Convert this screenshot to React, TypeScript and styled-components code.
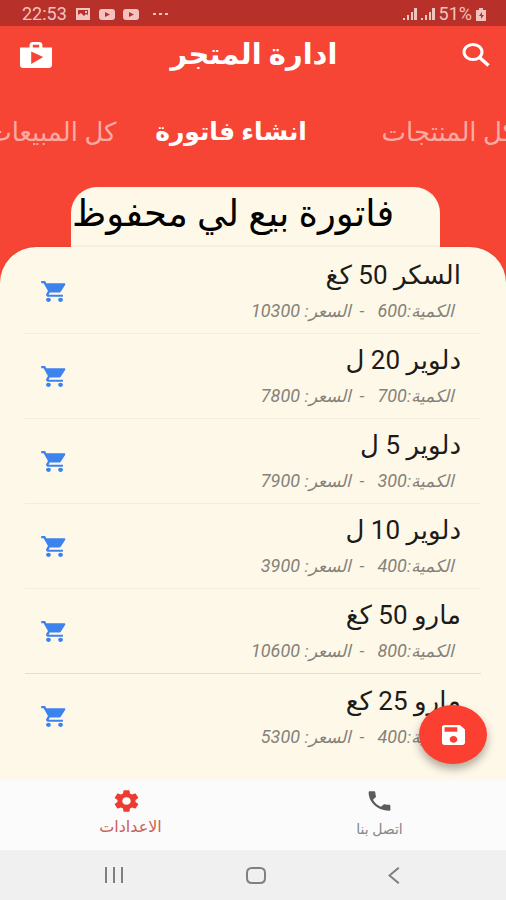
import React from "react";
import styled, { createGlobalStyle } from "styled-components";

const red = "#f64435";
const cream = "#fef8e9";

const GlobalStyle = createGlobalStyle`
  * { box-sizing: border-box; }
  body {
    margin: 0;
    font-family: Roboto, "DejaVu Sans", sans-serif;
    background: ${red};
  }
  button { font: inherit; border: 0; padding: 0; background: none; cursor: pointer; }
  svg { display: block; flex: none; }
`;

const Screen = styled.div`
  display: flex;
  flex-direction: column;
  height: 100vh;
  background: ${red};
`;

const StatusBar = styled.div`
  display: flex;
  align-items: center;
  justify-content: space-between;
  height: 26px;
  flex: none;
  padding: 2px 20px 0 22px;
  background: #b7312a;
  color: #f3c3bf;
  font-size: 18px;
  line-height: 24px;
`;

const StatusGroup = styled.div<{ $gap: number }>`
  display: flex;
  align-items: center;
  gap: ${(p) => p.$gap}px;
`;

const AppBar = styled.header`
  display: grid;
  grid-template-columns: 32px 1fr 32px;
  align-items: center;
  height: 60px;
  flex: none;
  padding: 0 14px 2px 20px;
  color: #fff;
`;

const AppTitle = styled.h1`
  margin: 0;
  padding: 0 4px 2px 0;
  font-size: 29px;
  line-height: 40px;
  font-weight: 700;
  text-align: center;
`;

const IconButton = styled.button`
  display: flex;
  align-items: center;
  justify-content: center;
  color: inherit;
`;

const TabBar = styled.nav`
  display: grid;
  grid-template-columns: 25% 1fr 25%;
  align-items: center;
  height: 92px;
  flex: none;
  overflow: hidden;
`;

const Tab = styled.button<{ $active?: boolean; $edge?: "left" | "right" }>`
  display: flex;
  min-width: 0;
  padding-left: ${(p) => (p.$edge === "right" ? 2 : 0)}px;
  padding-right: ${(p) => (p.$edge === "left" ? 10 : p.$edge === "right" ? 0 : 44)}px;
  justify-content: ${(p) =>
    p.$edge === "left" ? "flex-end" : p.$edge === "right" ? "flex-start" : "center"};
  color: ${(p) => (p.$active ? "#fff" : "#fbaaa2")};
  font-size: ${(p) => (p.$active ? 25 : 26)}px;
  line-height: 32px;
  font-weight: ${(p) => (p.$active ? 700 : 400)};
  white-space: nowrap;
`;

const InvoiceTab = styled.div`
  align-self: flex-start;
  flex: none;
  display: flex;
  align-items: center;
  width: 73%;
  height: 60px;
  margin: 9px 0 0 14%;
  padding: 0 46px 6px 0;
  border-radius: 26px 26px 0 0;
  background: ${cream};
`;

const InvoiceTitle = styled.h2`
  flex: 1;
  margin: 0;
  color: #000;
  font-size: 37px;
  line-height: 44px;
  font-weight: 400;
  white-space: nowrap;
`;

const Panel = styled.main`
  position: relative;
  flex: 1;
  min-height: 0;
  border-radius: 36px 36px 0 0;
  background: ${cream};
  box-shadow: 0 -1px 2px rgba(120, 90, 40, 0.12);
`;

const List = styled.ul`
  list-style: none;
  margin: 0;
  padding: 2px 25px 0;
  height: 100%;
  overflow: hidden;
`;

const Row = styled.li<{ $strong?: boolean }>`
  display: flex;
  align-items: center;
  justify-content: space-between;
  height: 85px;
  padding: 0 20px 0 15px;
  border-bottom: 1px solid ${(p) => (p.$strong ? "#e6dccf" : "#f6ebdd")};
  &:last-child { border-bottom: 0; }
`;

const CartButton = styled(IconButton)`
  color: #3d83ee;
`;

const RowText = styled.div`
  display: flex;
  flex-direction: column;
  gap: 4px;
`;

const ItemName = styled.div`
  color: #1c1b19;
  font-size: 26px;
  line-height: 36px;
`;

const ItemMeta = styled.div`
  padding-right: 7px;
  color: #85827a;
  font-size: 18px;
  line-height: 28px;
  font-style: italic;
  white-space: pre;
`;

const MetaLabel = styled.span`
  font-size: 17px;
`;

const Fab = styled.button`
  position: absolute;
  right: 19px;
  bottom: 16px;
  display: flex;
  align-items: center;
  justify-content: center;
  width: 68px;
  height: 59px;
  border-radius: 50%;
  background: #fb4032;
  color: #fff;
  box-shadow: 0 5px 8px rgba(60, 50, 40, 0.4);
`;

const BottomNav = styled.nav`
  display: grid;
  grid-template-columns: 1fr 1fr;
  height: 70px;
  flex: none;
  background: #fbfbfb;
`;

const NavItem = styled.button<{ $active?: boolean }>`
  display: flex;
  flex-direction: column;
  align-items: center;
  padding-top: 8px;
  gap: ${(p) => (p.$active ? 2 : 4)}px;
  color: ${(p) => (p.$active ? "#ec3c32" : "#5c5c5c")};
`;

const NavLabel = styled.span<{ $active?: boolean }>`
  padding-left: ${(p) => (p.$active ? 8 : 0)}px;
  color: ${(p) => (p.$active ? "#c9605c" : "#858585")};
  font-size: ${(p) => (p.$active ? 16 : 14)}px;
  line-height: 22px;
`;

const SystemBar = styled.div`
  display: grid;
  grid-template-columns: 45% 11% 44%;
  height: 50px;
  flex: none;
  background: #f0f0f0;
  color: #808080;
`;

const SystemButton = styled(IconButton)<{ $align: string }>`
  justify-content: ${(p) => p.$align};
  padding: 0 ${(p) => (p.$align === "center" ? 0 : 105)}px;
`;

type GlyphProps = { d: string; w: number; h: number; box?: string };
const Glyph = ({ d, w, h, box = "0 0 24 24" }: GlyphProps) => (
  <svg width={w} height={h} viewBox={box} preserveAspectRatio="none" fill="currentColor" aria-hidden="true">
    <path fillRule="evenodd" d={d} />
  </svg>
);

const SearchIcon = () => (
  <svg width="28" height="24" viewBox="0 0 28 24" fill="none" stroke="currentColor" strokeWidth="3" aria-hidden="true">
    <ellipse cx="11" cy="9" rx="9" ry="7.500" />
    <path d="M17 14l9.500 8.500" strokeWidth="3.500" />
  </svg>
);

const icons = {
  shop: "M16 6V4c0-1.110-.89-2-2-2h-4c-1.110 0-2 .89-2 2v2H2v13c0 1.110.89 2 2 2h16c1.110 0 2-.89 2-2V6h-6zm-6-2h4v2h-4V4zM9 18V9l7.500 4L9 18z",
  cart: "M7 18c-1.100 0-1.990.9-1.990 2S5.900 22 7 22s2-.9 2-2-.9-2-2-2zM1 2v2h2l3.600 7.590-1.350 2.450c-.16.28-.25.61-.25.96 0 1.100.9 2 2 2h12v-2H7.420c-.14 0-.25-.11-.25-.25l.03-.12.9-1.630h7.450c.75 0 1.410-.41 1.750-1.030l3.580-6.490c.08-.14.12-.31.12-.48 0-.55-.45-1-1-1H5.210l-.94-2H1zm16 16c-1.100 0-1.990.9-1.990 2s.89 2 1.990 2 2-.9 2-2-.9-2-2-2z",
  save: "M17 3H5c-1.110 0-2 .9-2 2v14c0 1.100.89 2 2 2h14c1.100 0 2-.9 2-2V7l-4-4zm-5 16c-1.660 0-3-1.340-3-3s1.340-3 3-3 3 1.340 3 3-1.340 3-3 3zm3-10H5V5h10v4z",
  gear: "M19.430 12.980c.04-.32.07-.64.07-.98s-.03-.66-.07-.98l2.110-1.650c.19-.15.24-.42.12-.64l-2-3.460c-.12-.22-.39-.3-.61-.22l-2.490 1c-.52-.4-1.080-.73-1.690-.98l-.38-2.650A.488.488 0 0 0 14 2h-4c-.25 0-.46.18-.49.42l-.38 2.650c-.61.25-1.170.59-1.690.98l-2.490-1c-.23-.09-.49 0-.61.22l-2 3.460c-.13.22-.07.49.12.64l2.110 1.650c-.04.32-.07.65-.07.98s.03.66.07.98l-2.110 1.650c-.19.15-.24.42-.12.64l2 3.460c.12.22.39.3.61.22l2.490-1c.52.4 1.080.73 1.690.98l.38 2.650c.03.24.24.42.49.42h4c.25 0 .46-.18.49-.42l.38-2.650c.61-.25 1.170-.59 1.690-.98l2.490 1c.23.09.49 0 .61-.22l2-3.460c.12-.22.07-.49-.12-.64l-2.110-1.650zM12 15.500c-1.930 0-3.500-1.570-3.500-3.500s1.570-3.500 3.500-3.500 3.500 1.570 3.500 3.500-1.570 3.500-3.500 3.500z",
  phone:
    "M6.620 10.790c1.440 2.830 3.760 5.140 6.590 6.590l2.200-2.200c.27-.27.67-.36 1.020-.24 1.120.37 2.330.57 3.570.57.55 0 1 .45 1 1V20c0 .55-.45 1-1 1-9.390 0-17-7.610-17-17 0-.55.45-1 1-1h3.500c.55 0 1 .45 1 1 0 1.250.2 2.450.57 3.570.11.35.03.74-.25 1.020l-2.200 2.200z",
  image: "M1 0h14v12H1zM3 2v5l3-2 3 3 2-2 2 1V2zM10 3h2v2h-2z",
  video: "M3 0h10q3 0 3 3v5q0 3-3 3H3q-3 0-3-3V3q0-3 3-3zM6 3v5l5-2.500z",
  dots: "M0 0h3v2H0zM6 0h3v2H6zM12 0h3v2h-3z",
  signal: "M0 10h2v2H0zM4 7h2v5H4zM8 4h2v8H8zM11 0h3v12h-3z",
  battery: "M3 0h4v2h3v11H0V2h3zM6 4L3 8h2v3l3-4H6z",
};

const items = [
  { name: "السكر 50 كغ", qty: 600, price: 10300 },
  { name: "دلوير 20 ل", qty: 700, price: 7800 },
  { name: "دلوير 5 ل", qty: 300, price: 7900 },
  { name: "دلوير 10 ل", qty: 400, price: 3900 },
  { name: "مارو 50 كغ", qty: 800, price: 10600, strong: true },
  { name: "مارو 25 كع", qty: 400, price: 5300 },
];

export default function App() {
  return (
    <Screen>
      <GlobalStyle />
      <StatusBar>
        <StatusGroup $gap={8}>
          <span>22:53</span>
          <Glyph d={icons.image} w={16} h={12} box="0 0 16 12" />
          <Glyph d={icons.video} w={16} h={11} box="0 0 16 11" />
          <Glyph d={icons.video} w={16} h={11} box="0 0 16 11" />
          <Glyph d={icons.dots} w={22} h={2} box="-6 0 22 2" />
        </StatusGroup>
        <StatusGroup $gap={4}>
          <Glyph d={icons.signal} w={14} h={12} box="0 0 14 12" />
          <Glyph d={icons.signal} w={14} h={12} box="0 0 14 12" />
          <span>51%</span>
          <Glyph d={icons.battery} w={10} h={13} box="0 0 10 13" />
        </StatusGroup>
      </StatusBar>

      <AppBar>
        <IconButton aria-label="المتجر">
          <Glyph d={icons.shop} w={32} h={26} box="2 2 20 19" />
        </IconButton>
        <AppTitle dir="rtl">ادارة المتجر</AppTitle>
        <IconButton aria-label="بحث">
          <SearchIcon />
        </IconButton>
      </AppBar>

      <TabBar>
        <Tab $edge="left"><span dir="rtl">كل المبيعات</span></Tab>
        <Tab $active aria-current="page"><span dir="rtl">انشاء فاتورة</span></Tab>
        <Tab $edge="right"><span dir="rtl">كل المنتجات</span></Tab>
      </TabBar>

      <InvoiceTab>
        <InvoiceTitle dir="rtl">فاتورة بيع لي محفوظ</InvoiceTitle>
      </InvoiceTab>

      <Panel>
        <List>
          {items.map((item) => (
            <Row key={item.name} $strong={item.strong}>
              <CartButton aria-label={item.name}>
                <Glyph d={icons.cart} w={29} h={25} />
              </CartButton>
              <RowText dir="rtl">
                <ItemName>{item.name}</ItemName>
                <ItemMeta>
                  <MetaLabel>الكمية:</MetaLabel>
                  {`${item.qty}   -  `}
                  <MetaLabel>السعر:</MetaLabel>
                  {` ${item.price}`}
                </ItemMeta>
              </RowText>
            </Row>
          ))}
        </List>
        <Fab aria-label="حفظ">
          <Glyph d={icons.save} w={23} h={20} box="3 3 18 18" />
        </Fab>
      </Panel>

      <BottomNav>
        <NavItem $active>
          <Glyph d={icons.gear} w={29} h={26} />
          <NavLabel $active dir="rtl">الاعدادات</NavLabel>
        </NavItem>
        <NavItem>
          <Glyph d={icons.phone} w={29} h={26} />
          <NavLabel dir="rtl">اتصل بنا</NavLabel>
        </NavItem>
      </BottomNav>

      <SystemBar>
        <SystemButton $align="flex-end" aria-label="التطبيقات">
          <Glyph d="M0 0h2v16H0zM8 0h2v16H8zM16 0h2v16h-2z" w={18} h={16} box="0 0 18 16" />
        </SystemButton>
        <SystemButton $align="center" aria-label="الرئيسية">
          <Glyph
            d="M6 0h8q6 0 6 6v5q0 6-6 6H6q-6 0-6-6V6q0-6 6-6zM6 2q-4 0-4 4v5q0 4 4 4h8q4 0 4-4V6q0-4-4-4z"
            w={20}
            h={17}
            box="0 0 20 17"
          />
        </SystemButton>
        <SystemButton $align="flex-start" aria-label="رجوع">
          <Glyph d="M10 0l1.500 1.500L3 8.500l8.500 7L10 17 0 8.500z" w={12} h={17} box="0 0 12 17" />
        </SystemButton>
      </SystemBar>
    </Screen>
  );
}
